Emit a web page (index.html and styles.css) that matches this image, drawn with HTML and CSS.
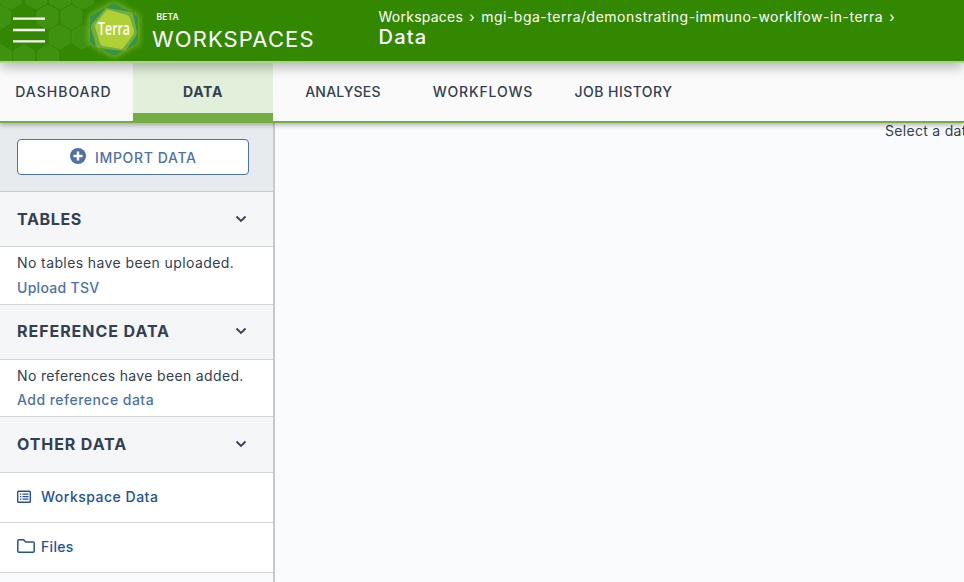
FILE: index.html
```html
<!DOCTYPE html>
<html lang="en">
<head>
<meta charset="utf-8">
<title>Terra Workspaces</title>
<link rel="stylesheet" href="styles.css">
</head>
<body>
<header class="topbar">
  <svg class="pattern" width="100" height="61" viewBox="0 0 100 61" aria-hidden="true">
    <defs><path id="hex" d="M0-11.5Q1 -11.5 2-11L9-7Q10.500-6 10.500-4.500V4.500Q10.500 6 9 7L2 11Q0 12 -2 11L-9 7Q-10.500 6-10.500 4.500V-4.500Q-10.500-6-9-7L-2-11Q-1-11.500 0-11.500Z"/></defs>
    <g fill="#3f9210" stroke="#46971a" stroke-width=".7">
      <use href="#hex" x="11" y="-3"/><use href="#hex" x="36" y="-3"/><use href="#hex" x="60" y="-3"/><use href="#hex" x="83" y="-3"/>
      <use href="#hex" x="0" y="17"/><use href="#hex" x="47.500" y="17"/><use href="#hex" x="71.500" y="17"/>
      <use href="#hex" x="59.500" y="37"/><use href="#hex" x="82.500" y="37"/>
      <use href="#hex" x="1" y="57"/><use href="#hex" x="24" y="57"/><use href="#hex" x="48" y="57"/>
    </g>
  </svg>
  <svg class="menu" width="32" height="27" viewBox="0 0 32 27" role="img" aria-label="Menu"><path d="M0 1.600H32M0 13H32M0 24.400H32" stroke="#fff" stroke-width="2.400"/></svg>
  <svg class="logo" width="60" height="61" viewBox="0 0 60 61">
    <defs><filter id="glow" x="-30%" y="-30%" width="160%" height="160%"><feGaussianBlur stdDeviation="3"/></filter></defs>
    <path d="M30 2L55 16V43L30 57L5 43V16Z" fill="#86bd25" filter="url(#glow)"/>
    <path d="M28 4Q30 2.500 32 4L52 15Q54 16 54 18V41Q54 43 52 44L32 55Q30 56 28 55L8 44Q6 43 6 41V18Q6 16 8 15Z" fill="#359447"/>
    <path d="M20 10Q21 8 23 8L46 12Q48 12 49 14L53 32Q53 34 52 36L42 50Q41 51 39 51L15 48Q13 48 12 46L7 28Q7 26 8 24Z" fill="#74ae3f"/>
    <path d="M22 11Q23 9 25 10L43 15Q45 16 46 18L50 31Q50 33 49 35L40 47Q39 49 37 49L19 46Q16 45 16 43L11 27Q11 25 12 23Z" fill="#afd136"/>
    <text x="14" y="35" textLength="32" lengthAdjust="spacingAndGlyphs">Terra</text>
  </svg>
  <div class="brand"><span class="beta">BETA</span><span class="product">WORKSPACES</span></div>
  <div class="crumbs">
    <div class="trail"><span class="c1">Workspaces</span><span class="sep s1">›</span><span class="c2">mgi-bga-terra/demonstrating-immuno-worklfow-in-terra</span><span class="sep">›</span></div>
    <div class="page">Data</div>
  </div>
</header>
<nav class="tabs">
  <a class="tab t1"><span>DASHBOARD</span></a><a class="tab t2 active"><span>DATA</span></a><a class="tab t3"><span>ANALYSES</span></a><a class="tab t4"><span>WORKFLOWS</span></a><a class="tab t5"><span>JOB HISTORY</span></a>
</nav>
<div class="body">
  <aside class="side">
    <div class="import">
      <button class="import-btn"><svg width="16" height="16" viewBox="0 0 16 16"><circle cx="8" cy="8" r="8" fill="#4d72aa"/><path d="M8 3.500V12.500M3.500 8H12.500" stroke="#fff" stroke-width="2.400"/></svg><span class="import-text">IMPORT DATA</span></button>
    </div>
    <div class="head h1"><span class="w-tables">TABLES</span><svg class="chev" width="12" height="8" viewBox="0 0 12 8"><path d="M1.500 1.500L6 6L10.500 1.500"/></svg></div>
    <div class="note n1"><span class="w-n1">No tables have been uploaded.</span><a class="w-a1">Upload TSV</a></div>
    <div class="head h2"><span class="w-ref">REFERENCE DATA</span><svg class="chev" width="12" height="8" viewBox="0 0 12 8"><path d="M1.500 1.500L6 6L10.500 1.500"/></svg></div>
    <div class="note n2"><span class="w-n2">No references have been added.</span><a class="w-a2">Add reference data</a></div>
    <div class="head h3"><span class="w-other">OTHER DATA</span><svg class="chev" width="12" height="8" viewBox="0 0 12 8"><path d="M1.500 1.500L6 6L10.500 1.500"/></svg></div>
    <div class="item"><svg width="18" height="14" viewBox="0 0 18 14"><rect x=".7" y="1.200" width="12.600" height="11" rx=".8" fill="none" stroke="#24529a" stroke-width="1.400"/><path d="M3 4.200H4.300M5.500 4.200H11.500M3 6.700H4.300M5.500 6.700H11.500M3 9.200H4.300M5.500 9.200H11.500" stroke="#24529a" stroke-width="1.200"/></svg><span class="w-wd">Workspace Data</span></div>
    <div class="item"><svg class="folder" width="18" height="14" viewBox="0 0 18 14"><path d="M.8 2Q.8 .8 2 .8H6.500L8.700 2.900H16Q17.200 2.900 17.200 4.100V12Q17.200 13.200 16 13.200H2Q.8 13.200 .8 12Z" fill="none" stroke="#24529a" stroke-width="1.500"/></svg><span class="w-f">Files</span></div>
  </aside>
  <main class="main"><span>Select a data type</span></main>
</div>
</body>
</html>
```

FILE: styles.css
```css
* { box-sizing: border-box; }
body { margin: 0; width: 964px; height: 582px; overflow: hidden; display: flex; flex-direction: column; font: 400 14px/20px Inter, "Open Sans", sans-serif; color: #333f52; background: #fafbfd; }
button { padding: 0; border: 0; background: none; font: inherit; }
svg { display: block; flex: none; }
span, a { white-space: nowrap; }
.topbar { position: relative; z-index: 3; display: flex; flex: none; height: 63px; background: #338801; border-bottom: 2px solid #b0d092; box-shadow: 0 3px 13px rgba(0,0,0,.32); color: #fff; }
.pattern { position: absolute; left: 0; top: 0; }
.menu { position: relative; margin: 17px 0 0 13px; }
.logo { position: relative; margin-left: 39px; }
.logo text { font: 600 18px "Open Sans", sans-serif; fill: #fff; }
.brand { width: 227px; padding: 12px 0 0 8px; display: flex; flex-direction: column; }
.beta { margin-left: 4.500px; font-size: 8.500px; line-height: 11px; font-weight: 600; letter-spacing: .1px; }
.product { font-size: 22px; line-height: 32px; letter-spacing: 1.100px; }
.crumbs { padding-top: 7px; margin-left: 7.500px; }
.trail { display: flex; }
.c1 { letter-spacing: .25px; }
.c2 { letter-spacing: .5px; }
.sep { margin-left: 6px; }
.s1 { margin-right: 7px; width: 5px; }
.page { font-size: 20px; line-height: 20px; font-weight: 450; letter-spacing: 1.200px; }
.tabs { position: relative; z-index: 2; display: flex; flex: none; height: 60px; background: #fafafa; border-bottom: 2px solid #74ae43; box-shadow: 0 2px 5px rgba(0,0,0,.3); }
.tab { display: flex; justify-content: center; padding-top: 19px; width: 140px; font-weight: 450; }
.t1 { width: 133px; padding-right: 6px; letter-spacing: 1px; }
.t2 { background: #e2efda; border-bottom: 8px solid #74ae43; font-weight: 650; letter-spacing: .7px; }
.t3 { letter-spacing: .2px; }
.t4 { letter-spacing: .85px; }
.t5 { letter-spacing: .45px; padding-left: 1px; }
.body { display: flex; flex: 1; min-height: 0; }
.side { width: 275px; flex: none; border-right: 2px solid #c8c9cb; }
.import { height: 69px; padding: 16px 24px 0 17px; background: #e8ebee; border-bottom: 1px solid #c9cccf; }
.import-btn { width: 232px; height: 36px; border: 1px solid #4d72aa; border-radius: 4px; background: #fff; color: #4d72aa; display: flex; align-items: center; padding-left: 52px; }
.import-btn svg { margin-top: -3px; margin-right: 9px; }
.import-text { margin-top: 2px; letter-spacing: .65px; }
.head { display: flex; align-items: center; justify-content: space-between; padding: 0 26px 0 17px; height: 55px; background: #f5f6f8; border-bottom: 1px solid #d2d4d7; font-size: 16px; font-weight: 700; }
.h2 { padding-bottom: 2px; }
.h3 { height: 56px; padding-bottom: 1px; }
.w-tables { letter-spacing: .65px; }
.w-ref { letter-spacing: .95px; }
.w-other { letter-spacing: .9px; }
.chev path { fill: none; stroke: #333f52; stroke-width: 1.800; }
.note { height: 58px; padding: 6px 17px 0; background: #fff; border-bottom: 1px solid #d2d4d7; display: flex; flex-direction: column; align-items: flex-start; gap: 5px; }
.n2 { height: 57px; gap: 4px; }
.w-n1 { letter-spacing: .4px; }
.w-n2 { letter-spacing: .34px; }
.w-a1 { letter-spacing: .3px; }
.w-a2 { letter-spacing: .47px; }
.note a, .import-text { color: #4d72aa; font-weight: 450; }
.item { height: 50px; display: flex; align-items: center; gap: 6px; padding: 0 0 2px 17px; background: #fff; border-bottom: 1px solid #d2d4d7; color: #24529a; font-weight: 450; letter-spacing: .5px; }
.folder { margin-top: -2px; }
.w-f { letter-spacing: .3px; }
.main { flex: 1; min-width: 0; overflow: hidden; padding: 0 0 0 610px; line-height: 16px; letter-spacing: .3px; }
```
